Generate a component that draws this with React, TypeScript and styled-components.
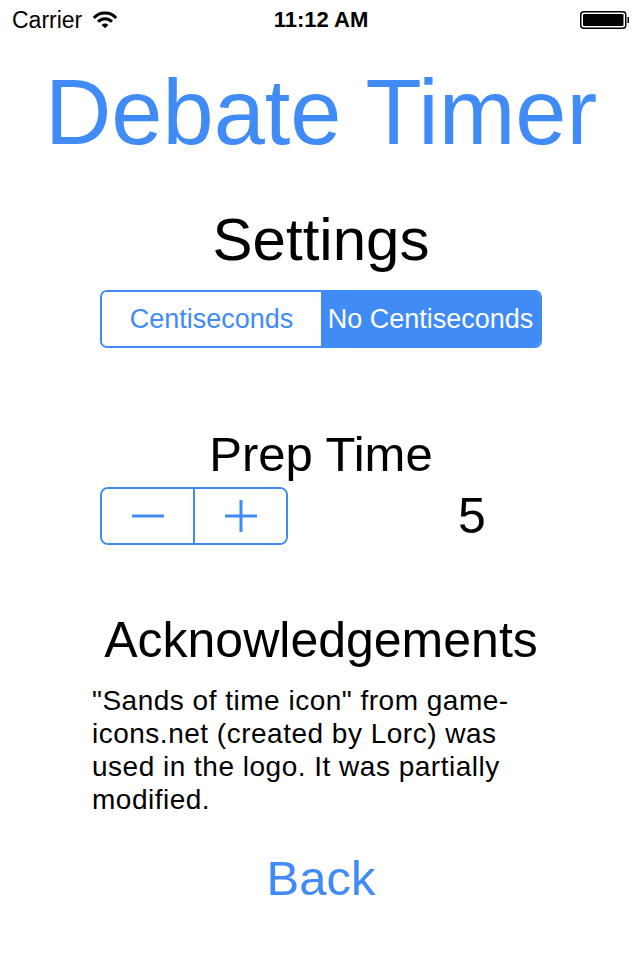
import React, { useState } from "react";
import styled, { createGlobalStyle } from "styled-components";

const BLUE = "#408BF6";

const GlobalStyle = createGlobalStyle`
  html, body {
    margin: 0;
    padding: 0;
    background: #ffffff;
  }
  body {
    font-family: "Liberation Sans", Arial, Helvetica, sans-serif;
    color: #000;
  }
  * { box-sizing: border-box; }
`;

const Screen = styled.div`
  width: 640px;
  height: 960px;
  background: #fff;
  display: flex;
  flex-direction: column;
  align-items: center;
  overflow: hidden;
`;

const StatusBar = styled.div`
  width: 100%;
  height: 40px;
  display: grid;
  grid-template-columns: 1fr auto 1fr;
  align-items: center;
  padding: 0 10px 0 12px;
  font-size: 23px;
`;

const StatusLeft = styled.div`
  display: flex;
  align-items: center;
  gap: 9px;
`;

const Time = styled.div`
  font-weight: bold;
  font-size: 22px;
`;

const StatusRight = styled.div`
  display: flex;
  justify-content: flex-end;
  align-items: center;
`;

const Title = styled.h1<{ $size: number; $color?: string; $mt: number }>`
  margin: ${(p) => p.$mt}px 0 0 0;
  font-weight: normal;
  font-size: ${(p) => p.$size}px;
  line-height: ${(p) => p.$size}px;
  color: ${(p) => p.$color || "#000"};
  text-align: center;
  white-space: nowrap;
  padding-left: 2px;
`;

const Segmented = styled.div`
  margin-top: 20px;
  margin-left: 2px;
  width: 442px;
  height: 58px;
  display: flex;
  border: 2px solid ${BLUE};
  border-radius: 7px;
  overflow: hidden;
`;

const Segment = styled.button<{ $active: boolean }>`
  flex: 1;
  border: none;
  margin: 0;
  padding: 0;
  font-family: inherit;
  font-size: 27px;
  background: ${(p) => (p.$active ? BLUE : "#fff")};
  color: ${(p) => (p.$active ? "#fff" : BLUE)};
  white-space: nowrap;
  cursor: pointer;
`;

const StepperRow = styled.div`
  margin-top: 8px;
  margin-left: 2px;
  width: 442px;
  height: 58px;
  display: flex;
  align-items: center;
`;

const Stepper = styled.div`
  width: 188px;
  height: 58px;
  display: flex;
  border: 2px solid ${BLUE};
  border-radius: 8px;
  overflow: hidden;
`;

const StepButton = styled.button<{ $divider?: boolean }>`
  flex: 1;
  border: none;
  border-left: ${(p) => (p.$divider ? `2px solid ${BLUE}` : "none")};
  background: #fff;
  padding: 0;
  margin: 0;
  display: flex;
  align-items: center;
  justify-content: center;
  cursor: pointer;
`;

const Value = styled.div`
  margin-left: 170px;
  font-size: 50px;
  line-height: 50px;
`;

const Paragraph = styled.p`
  margin: 19px 0 0 92px;
  width: 440px;
  font-size: 28px;
  line-height: 33px;
  letter-spacing: 0.5px;
  align-self: flex-start;
`;

const BackButton = styled.button`
  margin-top: 38px;
  margin-left: 2px;
  border: none;
  background: none;
  padding: 0;
  font-family: inherit;
  font-size: 49px;
  line-height: 49px;
  color: ${BLUE};
  cursor: pointer;
`;

const WifiIcon = () => (
  <svg width="28" height="18" viewBox="0 0 28 18">
    <path d="M2.9 7 A15 15 0 0 1 25.1 7" fill="none" stroke="#000" strokeWidth="3" />
    <path d="M7.1 10.8 A9.3 9.3 0 0 1 20.9 10.8" fill="none" stroke="#000" strokeWidth="3" />
    <path d="M14 17.3 L10.6 13.9 A4.8 4.8 0 0 1 17.4 13.9 Z" fill="#000" />
  </svg>
);

const BatteryIcon = () => (
  <svg width="50" height="20" viewBox="0 0 50 20">
    <rect x="0.75" y="1.75" width="45" height="16.5" rx="3" fill="none" stroke="#000" strokeWidth="1.5" />
    <rect x="3" y="4" width="40.5" height="12" rx="1.2" fill="#000" />
    <path d="M47.5 7 H49 V13 H47.5 Z" fill="#000" />
  </svg>
);

const MinusIcon = () => (
  <svg width="32" height="32" viewBox="0 0 32 32">
    <rect x="0" y="14.5" width="32" height="3" fill={BLUE} />
  </svg>
);

const PlusIcon = () => (
  <svg width="32" height="32" viewBox="0 0 32 32">
    <rect x="0" y="14.5" width="32" height="3" fill={BLUE} />
    <rect x="14.5" y="0" width="3" height="32" fill={BLUE} />
  </svg>
);

export default function App() {
  const [centi, setCenti] = useState(false);
  const [prep, setPrep] = useState(5);

  return (
    <>
      <GlobalStyle />
      <Screen>
        <StatusBar>
          <StatusLeft>
            <span>Carrier</span>
            <WifiIcon />
          </StatusLeft>
          <Time>11:12 AM</Time>
          <StatusRight>
            <BatteryIcon />
          </StatusRight>
        </StatusBar>

        <Title $size={92} $color={BLUE} $mt={26}>
          Debate Timer
        </Title>

        <Title $size={60} $mt={52}>
          Settings
        </Title>

        <Segmented>
          <Segment $active={centi} onClick={() => setCenti(true)}>
            Centiseconds
          </Segment>
          <Segment $active={!centi} onClick={() => setCenti(false)}>
            No Centiseconds
          </Segment>
        </Segmented>

        <Title $size={49} $mt={82}>
          Prep Time
        </Title>

        <StepperRow>
          <Stepper>
            <StepButton onClick={() => setPrep((v) => Math.max(0, v - 1))}>
              <MinusIcon />
            </StepButton>
            <StepButton $divider onClick={() => setPrep((v) => v + 1)}>
              <PlusIcon />
            </StepButton>
          </Stepper>
          <Value>{prep}</Value>
        </StepperRow>

        <Title $size={50} $mt={70}>
          Acknowledgements
        </Title>

        <Paragraph>
          "Sands of time icon" from game-icons.net (created by Lorc) was used in the logo. It was
          partially modified.
        </Paragraph>

        <BackButton>Back</BackButton>
      </Screen>
    </>
  );
}
